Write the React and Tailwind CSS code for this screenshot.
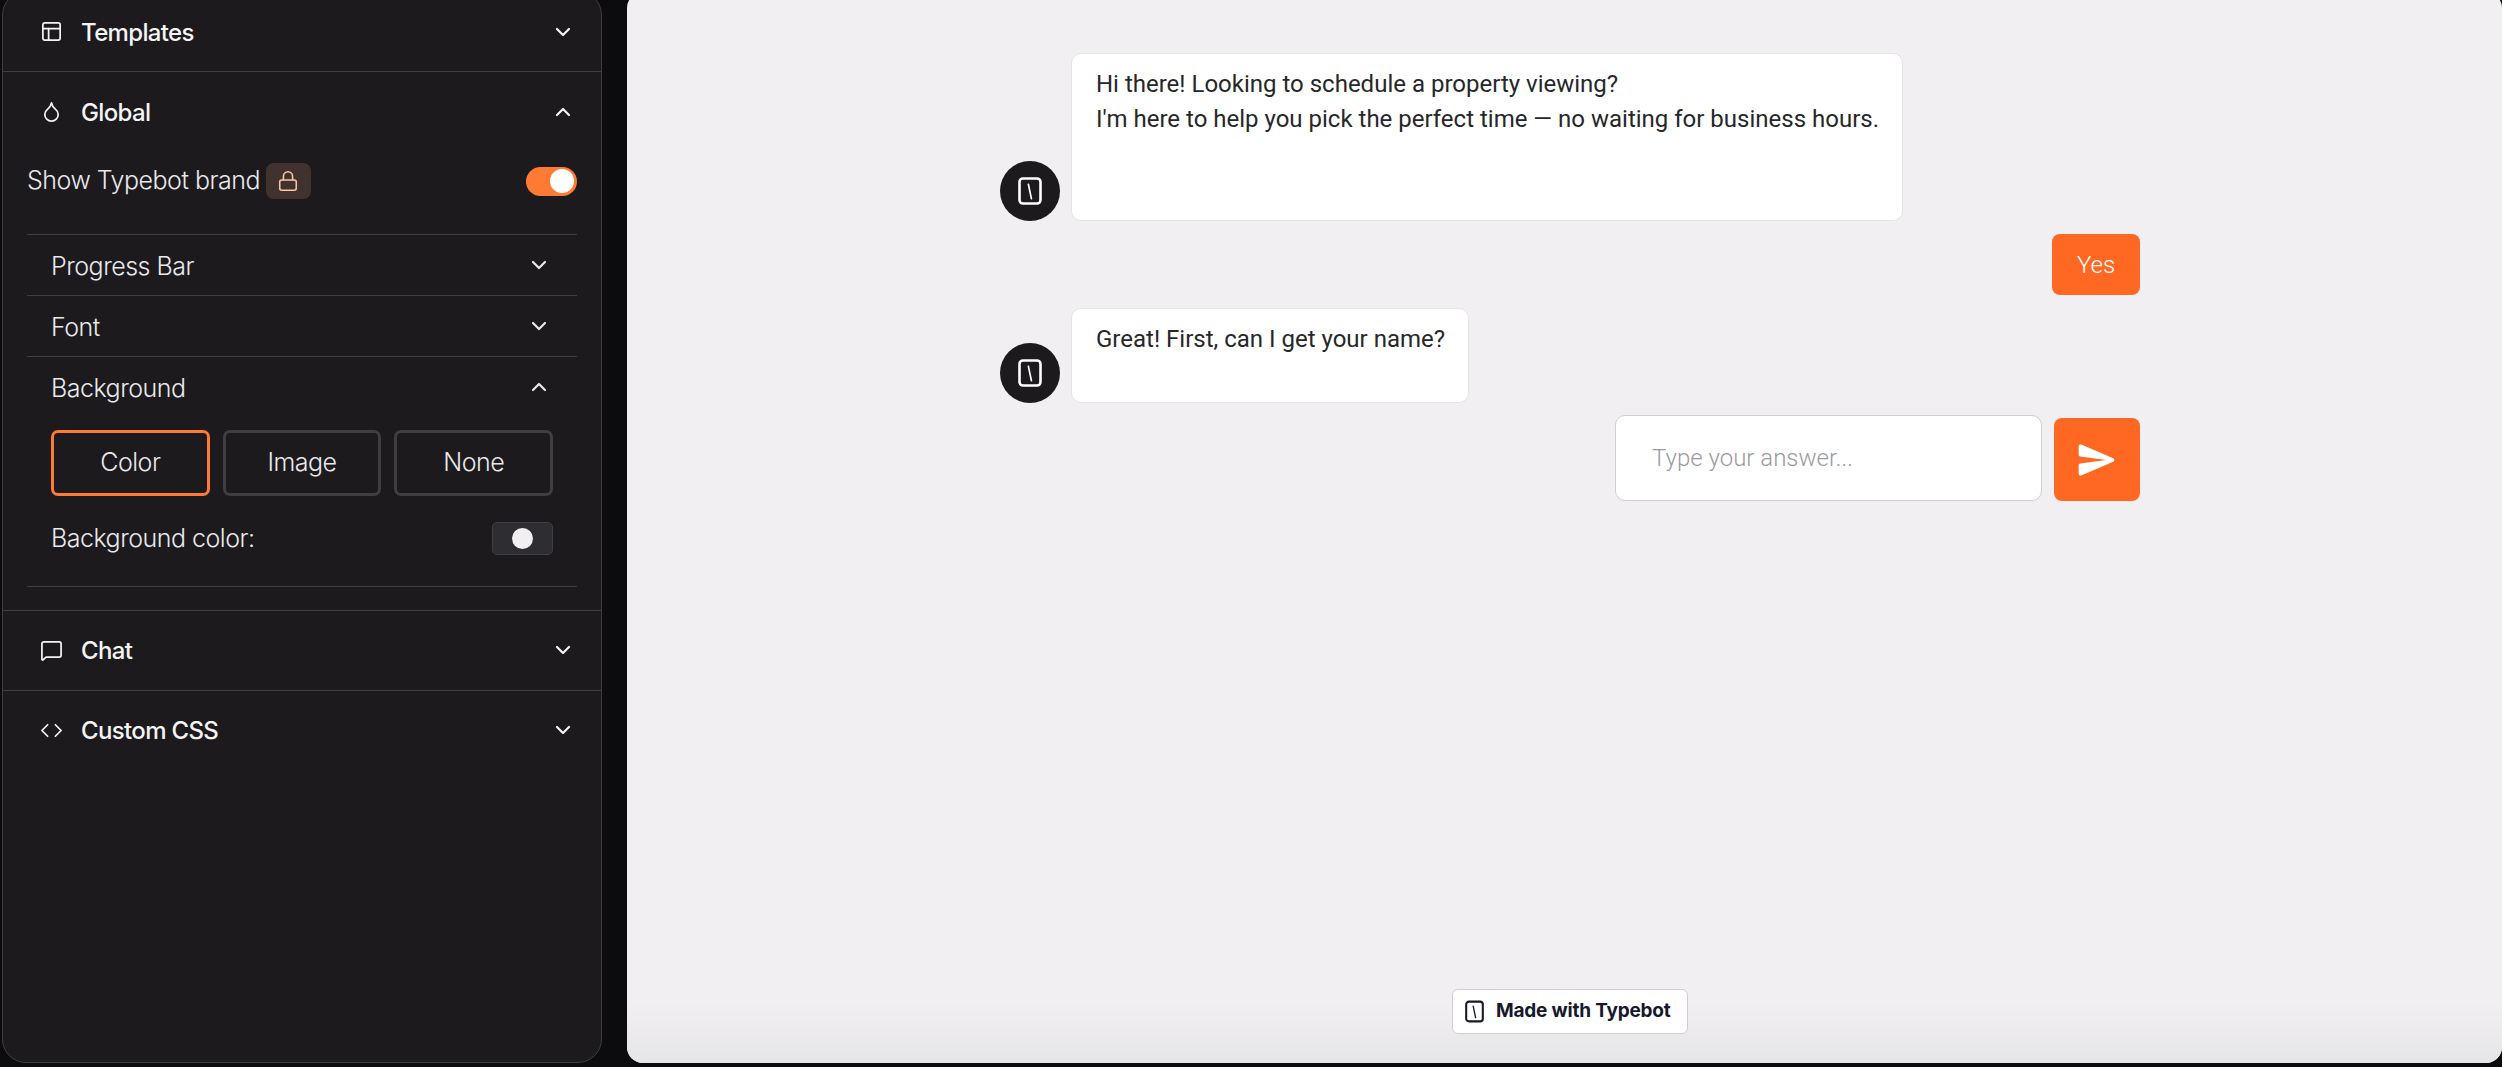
import { ChevronDown, ChevronUp, Code, Droplet, Lock, MessageSquare, PanelsTopLeft } from "lucide-react";

const sans = "font-['Inter','Noto_Sans',sans-serif]";

const Logo = ({ className }) => (
  <svg viewBox="0 0 24 28" fill="none" className={className}>
    <rect x="1.5" y="1.5" width="21" height="25" rx="3.5" stroke="currentColor" strokeWidth="2.6" />
    <path d="M10.4 7.4 L13.4 21.6" stroke="currentColor" strokeWidth="1.7" strokeLinecap="round" />
  </svg>
);

const SendIcon = () => (
  <svg viewBox="0 0 24 24" fill="currentColor" className="w-[44px] h-[44px] text-white">
    <path d="M3.4 20.4l17.45-7.48a1 1 0 0 0 0-1.84L3.4 3.6a.993.993 0 0 0-1.39.91L2 9.12c0 .5.37.93.87.99L17 12 2.87 13.88c-.5.07-.87.5-.87 1l.01 4.61c0 .71.73 1.2 1.39.91z" />
  </svg>
);

const SectionHeader = ({ icon: Icon, label, open }) => (
  <div className="h-[79px] flex items-center justify-between pl-[37px] pr-[26px] text-[#f4f4f5]">
    <div className="flex items-center gap-[18px]">
      <Icon className="w-[23px] h-[23px]" strokeWidth={1.8} />
      <span className="text-[24px] font-medium tracking-[-0.65px] pt-[2px]">{label}</span>
    </div>
    {open ? <ChevronUp className="w-[24px] h-[24px]" strokeWidth={2.2} /> : <ChevronDown className="w-[24px] h-[24px]" strokeWidth={2.2} />}
  </div>
);

const SubHeader = ({ label, open }) => (
  <div className="h-[60px] flex items-center justify-between pl-[24px] pr-[26px] text-[#e9e9ec]">
    <span className="text-[25px] font-light tracking-[-0.5px] pt-[3px]">{label}</span>
    {open ? <ChevronUp className="w-[24px] h-[24px]" strokeWidth={2.2} /> : <ChevronDown className="w-[24px] h-[24px]" strokeWidth={2.2} />}
  </div>
);

const BgOption = ({ label, active }) => (
  <div className={`flex-1 h-[66px] flex items-center justify-center rounded-[7px] border-[3px] text-[25px] font-light tracking-[-0.5px] text-[#e9e9ec] ${active ? "border-[#ff7a33]" : "border-[#3f3f43]"}`}>
    {label}
  </div>
);

const Avatar = () => (
  <div className="w-[60px] h-[60px] shrink-0 rounded-full bg-[#1c1a1d] flex items-center justify-center text-white">
    <Logo className="w-[24px] h-[28px]" />
  </div>
);

const BotMessage = ({ lines, className }) => (
  <div className="flex items-end gap-[11px]">
    <Avatar />
    <div className={`bg-white border border-[#e4e4e7] rounded-[10px] px-[24px] pt-[13px] text-[24px] leading-[35px] text-[#27272a] whitespace-nowrap ${className}`}>
      {lines.map((line) => <p key={line}>{line}</p>)}
    </div>
  </div>
);

const App = () => {
  return (
    <div className="h-screen w-full overflow-hidden flex bg-[#0c0b0d] font-['Roboto',sans-serif]">
      <aside className={`w-[600px] ml-[2px] mt-[-9px] mb-[4px] shrink-0 bg-[#1c1a1d] border border-[#3f3e43] rounded-[24px] ${sans}`}>
        <SectionHeader icon={PanelsTopLeft} label="Templates" />
        <div className="border-t border-[#3f3e43]">
          <SectionHeader icon={Droplet} label="Global" open />
          <div className="px-[24px]">
            <div className="h-[70px] flex items-center justify-between mt-[-5px] mb-[18px]">
              <div className="flex items-center gap-[6px]">
                <span className="text-[25px] font-light tracking-[-0.5px] text-[#e9e9ec]">Show Typebot brand</span>
                <div className="w-[45px] h-[36px] rounded-[8px] bg-[#40332f] flex items-center justify-center">
                  <Lock className="w-[22px] h-[22px] text-[#fdc5a5]" strokeWidth={1.7} />
                </div>
              </div>
              <div className="w-[51px] h-[29px] rounded-full bg-[#ff7a33] flex items-center justify-end pr-[3px]">
                <div className="w-[24px] h-[24px] rounded-full bg-white" />
              </div>
            </div>
            <div className="border-t border-[#3f3e43]"><SubHeader label="Progress Bar" /></div>
            <div className="border-t border-[#3f3e43]"><SubHeader label="Font" /></div>
            <div className="border-t border-[#3f3e43]">
              <SubHeader label="Background" open />
              <div className="px-[24px] pt-[13px] pb-[28px]">
                <div className="flex gap-[13px]">
                  <BgOption label="Color" active />
                  <BgOption label="Image" />
                  <BgOption label="None" />
                </div>
                <div className="flex items-center justify-between mt-[24px]">
                  <span className="text-[25px] font-light tracking-[-0.5px] text-[#e9e9ec]">Background color:</span>
                  <div className="w-[61px] h-[33px] rounded-[5px] bg-[#2e2d31] border border-[#3f3e43] flex items-center justify-center">
                    <div className="w-[21px] h-[21px] rounded-full bg-[#f1eff2]" />
                  </div>
                </div>
              </div>
            </div>
            <div className="border-t border-[#3f3e43] h-[24px]" />
          </div>
        </div>
        <div className="border-t border-[#3f3e43]"><SectionHeader icon={MessageSquare} label="Chat" /></div>
        <div className="border-t border-[#3f3e43]"><SectionHeader icon={Code} label="Custom CSS" /></div>
      </aside>

      <main className="relative flex-1 ml-[25px] mt-[-8px] mb-[4px] bg-[#f1eff2] rounded-[16px] overflow-hidden pl-[373px] pt-[61px]">
        <div className="w-[1140px] flex flex-col">
          <BotMessage
            className="w-[832px] h-[168px]"
            lines={["Hi there! Looking to schedule a property viewing?", "I'm here to help you pick the perfect time — no waiting for business hours."]}
          />
          <div className="flex justify-end mt-[13px]">
            <div className="h-[61px] w-[88px] rounded-[8px] bg-[#ff6822] flex items-center justify-center text-white text-[24px] font-light">Yes</div>
          </div>
          <div className="mt-[13px]">
            <BotMessage className="w-[398px] h-[95px]" lines={["Great! First, can I get your name?"]} />
          </div>
          <div className="flex justify-end items-end gap-[12px] mt-[12px]">
            <div className="w-[427px] h-[86px] bg-white border border-[#cfced3] rounded-[10px] flex items-center pl-[36px] text-[24px] font-light text-[#9a9aa3]">Type your answer...</div>
            <div className="w-[86px] h-[83px] rounded-[8px] bg-[#ff6822] flex items-center justify-center"><SendIcon /></div>
          </div>
        </div>

        <div className="absolute left-0 right-0 bottom-0 h-[60px] bg-gradient-to-b from-[#f1eff2] to-[#e6e5e8]" />
        <div className="absolute left-[825px] bottom-[29px] w-[236px] h-[45px] bg-white border border-[#cfced3] rounded-[6px] flex items-center gap-[12px] pl-[12px] text-[#16182b]">
          <Logo className="w-[19px] h-[23px]" />
          <span className="text-[19px] font-bold font-['Inter',sans-serif] tracking-[-0.2px]">Made with Typebot</span>
        </div>
      </main>
    </div>
  );
};

export default App;
